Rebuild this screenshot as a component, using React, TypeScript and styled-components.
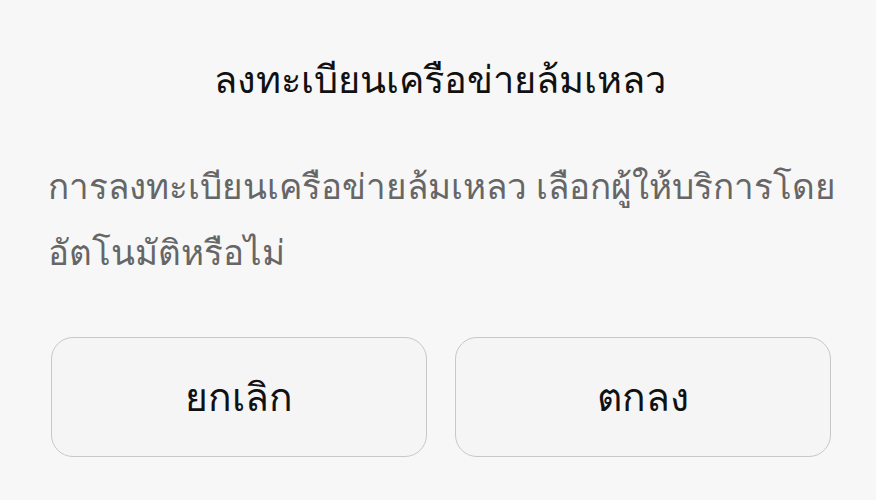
import styled, { createGlobalStyle } from 'styled-components';

const GlobalStyle = createGlobalStyle`
  html, body {
    margin: 0;
    padding: 0;
    background: #f7f7f7;
  }
  * {
    box-sizing: border-box;
  }
`;

const Dialog = styled.section`
  width: 876px;
  height: 500px;
  padding: 50px 36px 0 48px;
  background: #f7f7f7;
  font-family: 'Noto Sans', 'DejaVu Sans', sans-serif;
`;

const Title = styled.h2`
  margin: 0 9px 0 0;
  text-align: center;
  font-size: 38px;
  font-weight: 400;
  line-height: 56px;
  color: #111;
`;

const Message = styled.p`
  margin: 47px 0 0;
  font-size: 35px;
  line-height: 66px;
  color: #666;
`;

const Actions = styled.div`
  display: grid;
  grid-template-columns: 376px 376px;
  gap: 28px;
  margin: 52px 0 0 3px;
`;

const ActionButton = styled.button`
  height: 120px;
  border: 1.5px solid #c8c8c8;
  border-radius: 22px;
  background: #f5f5f5;
  font-family: inherit;
  font-size: 39px;
  color: #111;
  cursor: pointer;
`;

const App = () => {
  return (
    <>
      <GlobalStyle />
      <Dialog>
        <Title>ลงทะเบียนเครือข่ายล้มเหลว</Title>
        <Message>
          การลงทะเบียนเครือข่ายล้มเหลว เลือกผู้ให้บริการโดยอัตโนมัติหรือไม่
        </Message>
        <Actions>
          <ActionButton>ยกเลิก</ActionButton>
          <ActionButton>ตกลง</ActionButton>
        </Actions>
      </Dialog>
    </>
  );
};

export default App;
